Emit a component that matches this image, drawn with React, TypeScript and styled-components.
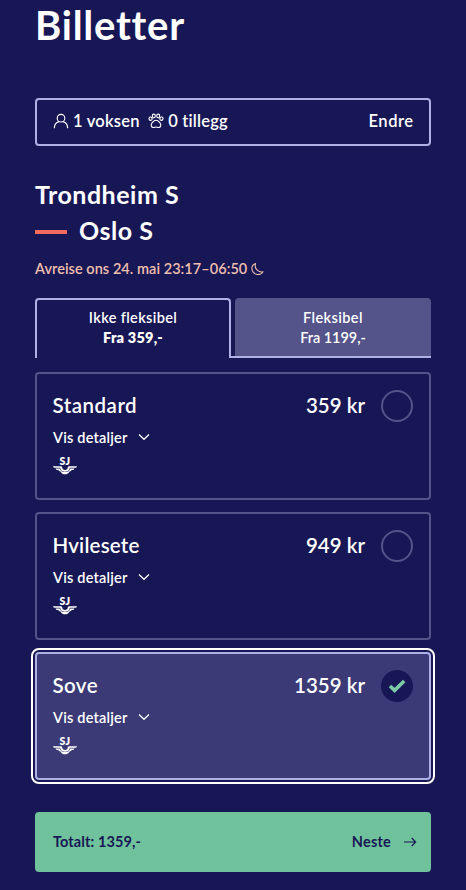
import React, { useState } from "react";
import styled, { createGlobalStyle } from "styled-components";

const navy = "#181756";
const lavender = "#aeb0e6";
const muted = "#54538a";
const mint = "#6fc29b";

const GlobalStyle = createGlobalStyle`
  *, *::before, *::after { box-sizing: border-box; }
  body {
    margin: 0;
    background: ${navy};
    color: #fff;
    font-family: Lato, "Open Sans", sans-serif;
    font-weight: 600;
    font-variant-ligatures: none;
  }
  button { font: inherit; font-variant-ligatures: none; color: inherit; background: none; border: 0; padding: 0; text-align: left; }
  svg { display: block; flex: none; }
`;

const Page = styled.main`
  height: 890px;
  padding: 0 35px;
  overflow: hidden;
`;

const Title = styled.h1`
  margin: 0 0 46px;
  padding-top: 1px;
  height: 52px;
  font-size: 40px;
  line-height: 48px;
  font-weight: 700;
  letter-spacing: 0.75px;
`;

const Travellers = styled.section`
  display: flex;
  align-items: center;
  height: 48px;
  padding: 0 16px 2px;
  border: 2px solid ${lavender};
  border-radius: 4px;
  font-size: 16.5px;
  line-height: 24px;
`;

const Count = styled.span`
  display: flex;
  align-items: center;
  gap: 4px;
  margin-right: 8.5px;
  white-space: nowrap;
  letter-spacing: 0.22px;
`;

const ChangeButton = styled.button`
  margin-left: auto;
  margin-right: -0.5px;
  letter-spacing: 0.5px;
`;

const Route = styled.h2`
  margin: 30px 0 0;
  font-size: 25px;
  line-height: 36px;
  font-weight: 700;
  letter-spacing: 0.5px;
`;

const Destination = styled.div`
  display: flex;
  align-items: center;
  gap: 12px;
  &::before {
    content: "";
    width: 32px;
    height: 4px;
    margin-top: 4px;
    background: #f4695d;
  }
`;

const Departure = styled.p`
  display: flex;
  align-items: center;
  gap: 4px;
  margin: 10px 0 19px;
  height: 21px;
  color: #efbfae;
  font-size: 14.5px;
  line-height: 20px;
  letter-spacing: 0.05px;
`;

const Tabs = styled.div`
  display: grid;
  grid-template-columns: 196px 200px;
  height: 60px;
`;

const TabLabel = styled.span<{ $strong?: boolean; $tracking: number }>`
  display: block;
  font-weight: ${(p) => (p.$strong ? 800 : 600)};
  letter-spacing: ${(p) => p.$tracking}px;
`;

const Tab = styled.button<{ $active: boolean }>`
  display: flex;
  flex-direction: column;
  align-items: center;
  padding: 8px 0 0;
  font-size: 14.5px;
  line-height: 20px;
  border: ${(p) => (p.$active ? `2px solid ${lavender}` : "0")};
  border-bottom: ${(p) => (p.$active ? "0" : `2px solid ${lavender}`)};
  border-radius: ${(p) => (p.$active ? "4px 4px 0 0" : "0")};
  ${(p) =>
    !p.$active &&
    `
    padding: 10px 0 0 4px;
    background: linear-gradient(${muted}, ${muted}) 4px 0 no-repeat;
    clip-path: path("M0 56H4V4Q4 0 8 0H196Q200 0 200 4V60H0Z");
  `}
`;

const Cards = styled.div`
  display: grid;
  gap: 12px;
  margin-top: 14px;
`;

const Card = styled.article<{ $selected: boolean }>`
  display: flex;
  justify-content: space-between;
  height: 128px;
  padding: 16px;
  border: 2px solid ${(p) => (p.$selected ? lavender : muted)};
  border-radius: 4px;
  background: ${(p) => (p.$selected ? "#3b3976" : "transparent")};
  outline: ${(p) => (p.$selected ? "2px solid #fff" : "none")};
  outline-offset: 2px;
`;

const CardName = styled.h3<{ $tracking: number }>`
  margin: 0 0 0 -0.5px;
  font-size: 20.5px;
  line-height: 30px;
  font-weight: 600;
  letter-spacing: ${(p) => p.$tracking}px;
`;

const Details = styled.button`
  display: flex;
  align-items: center;
  gap: 11px;
  margin: 8px 0 6px;
  height: 20px;
  font-size: 14.5px;
  line-height: 20px;
  letter-spacing: 0.2px;
  svg { margin-bottom: 2px; }
`;

const PriceSelect = styled.button`
  display: flex;
  align-items: center;
  align-self: flex-start;
  gap: 16px;
  height: 32px;
  font-size: 20.5px;
  line-height: 28px;
`;

const Price = styled.span`
  margin: 0 0 2px;
`;

const Radio = styled.span<{ $selected: boolean }>`
  display: flex;
  align-items: center;
  justify-content: center;
  width: 32px;
  height: 32px;
  border-radius: 50%;
  border: ${(p) => (p.$selected ? "0" : `2px solid ${muted}`)};
  background: ${(p) => (p.$selected ? navy : "transparent")};
`;

const Footer = styled.button`
  display: flex;
  align-items: center;
  justify-content: space-between;
  width: 100%;
  height: 60px;
  margin-top: 32px;
  padding: 0 14px 0 18px;
  border-radius: 4px;
  background: ${mint};
  color: ${navy};
  font-size: 14.5px;
  line-height: 20px;
  font-weight: 700;
  letter-spacing: 0.1px;
`;

const Next = styled.span`
  display: flex;
  align-items: center;
  gap: 12px;
  letter-spacing: 0.2px;
`;

const PersonIcon = () => (
  <svg width="16" height="16" viewBox="0 0 16 16" fill="none" stroke="#fff" strokeWidth="1.1">
    <circle cx="8" cy="5.2" r="3.8" />
    <path d="M1.4 15.2c0-3.6 2-5.9 4.6-6.6M14.6 15.2c0-3.6-2-5.9-4.6-6.6" />
  </svg>
);

const PawIcon = () => (
  <svg width="16" height="16" viewBox="0 0 16 16" fill="none" stroke="#fff" strokeWidth="1.1">
    <ellipse cx="5.8" cy="3" rx="1.5" ry="1.9" />
    <ellipse cx="10.2" cy="3" rx="1.5" ry="1.9" />
    <ellipse cx="2.6" cy="5.7" rx="1.5" ry="1.7" transform="rotate(-20 2.6 5.7)" />
    <ellipse cx="13.4" cy="5.7" rx="1.5" ry="1.7" transform="rotate(20 13.4 5.7)" />
    <path d="M8 7.2c-2.3 0-2.9 1.5-4 2.7-1.500 2-.8 4.700 1.500 4.600 1 0 1.700-.5 2.500-.5s1.500.5 2.500.5c2.300.1 3-2.600 1.500-4.600-1.100-1.200-1.700-2.700-4-2.700Z" />
  </svg>
);

const MoonIcon = () => (
  <svg width="13" height="14" viewBox="0 0 13.5 14" fill="none" stroke="currentColor" strokeWidth="1.1" strokeLinejoin="round">
    <path d="M4.7 1.3C1.6 2.5.5 5.500 1.200 8.300c1.400 4.900 8.300 6.200 11.300 1.500-1.500.4-3.900.3-5.700-1.300C4.500 6.600 4 3.700 4.700 1.300Z" />
  </svg>
);

const Chevron = () => (
  <svg width="12" height="8" viewBox="0 0 12 8" fill="none" stroke="#fff" strokeWidth="1.2">
    <path d="M1 1.5 6 6.3 11 1.5" />
  </svg>
);

const CheckIcon = () => (
  <svg width="18" height="16" viewBox="0 0 18 16" fill="none" stroke="#7bc9a6" strokeWidth="3.6">
    <path d="M2 8 6.6 12.4 16.2 3" />
  </svg>
);

const ArrowIcon = () => (
  <svg width="14" height="10" viewBox="0 0 14 10" fill="none" stroke={navy} strokeWidth="1.1">
    <path d="M1 5h11.5M8.7 1l4 4-4 4" />
  </svg>
);

const Letters = styled.text`
  font: 800 10.5px Lato, sans-serif;
`;

const SjLogo = () => (
  <svg width="24" height="21" viewBox="0 -4 24 21" fill="#fff">
    <Letters x="11.8" y="6.8" textAnchor="middle">SJ</Letters>
    <path d="M0 8.2h7.500c1.200 0 1.700.6 1.800 1.600.1 1.300.9 2.100 2.700 2.100s2.600-.8 2.700-2.100c.1-1 .6-1.600 1.800-1.600H24c-.3 1-.9 1.500-2 1.600h-4.200c-.8 0-1.200.4-1.400 1.200-.4 1.700-1.900 2.700-4.400 2.700S8 12.700 7.600 11c-.2-.8-.6-1.200-1.400-1.200H2C.9 9.700.3 9.200 0 8.200Z" />
    <path d="M2.600 10.400h3.700c.5 0 .7.300.8.800.5 2 2.400 2.900 4.900 2.900s4.400-.9 4.900-2.900c.1-.5.3-.8.8-.8h3.700c-.3 1-1 1.500-2 1.500h-.7c-.4.9-1 1.400-2.200 1.500-.8 1.900-2.300 2.800-4.500 2.800s-3.700-.9-4.500-2.800c-1.200-.1-1.800-.6-2.200-1.500h-.7c-1 0-1.700-.5-2-1.500Z" />
  </svg>
);

const tickets = [
  { name: "Standard", price: "359 kr", tracking: 0.5 },
  { name: "Hvilesete", price: "949 kr", tracking: 0.2 },
  { name: "Sove", price: "1359 kr", tracking: 0.4 },
];

export default function App() {
  const [selected, setSelected] = useState("Sove");
  return (
    <Page>
      <GlobalStyle />
      <Title>Billetter</Title>
      <Travellers>
        <Count><PersonIcon />1 voksen</Count>
        <Count><PawIcon />0 tillegg</Count>
        <ChangeButton>Endre</ChangeButton>
      </Travellers>
      <Route>
        <div>Trondheim S</div>
        <Destination>Oslo S</Destination>
      </Route>
      <Departure>Avreise ons 24. mai 23:17–06:50<MoonIcon /></Departure>
      <Tabs>
        <Tab $active>
          <TabLabel $tracking={0.35}>Ikke fleksibel</TabLabel>
          <TabLabel $strong $tracking={0.2}>Fra 359,-</TabLabel>
        </Tab>
        <Tab $active={false}>
          <TabLabel $tracking={0.4}>Fleksibel</TabLabel>
          <TabLabel $tracking={-0.05}>Fra 1199,-</TabLabel>
        </Tab>
      </Tabs>
      <Cards>
        {tickets.map(({ name, price, tracking }) => (
          <Card key={name} $selected={selected === name}>
            <div>
              <CardName $tracking={tracking}>{name}</CardName>
              <Details>Vis detaljer<Chevron /></Details>
              <SjLogo />
            </div>
            <PriceSelect onClick={() => setSelected(name)}>
              <Price>{price}</Price>
              <Radio $selected={selected === name}>{selected === name && <CheckIcon />}</Radio>
            </PriceSelect>
          </Card>
        ))}
      </Cards>
      <Footer>
        <span>Totalt: 1359,-</span>
        <Next>Neste<ArrowIcon /></Next>
      </Footer>
    </Page>
  );
}
